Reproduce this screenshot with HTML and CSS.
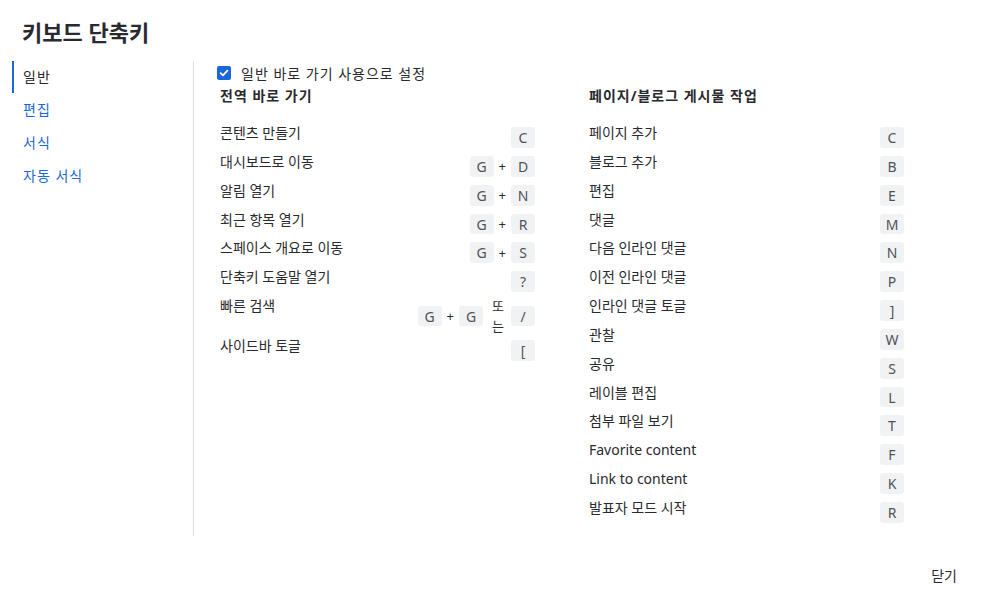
FILE: index.html
```html
<!DOCTYPE html>
<html lang="ko">
<head>
<meta charset="utf-8">
<title>키보드 단축키</title>
<link rel="stylesheet" href="styles.css">
</head>
<body>
<div class="dialog">
  <h1 class="title">키보드 단축키</h1>
  <div class="body">
    <nav class="sidebar">
      <a class="nav-item active">일반</a>
      <a class="nav-item">편집</a>
      <a class="nav-item">서식</a>
      <a class="nav-item">자동 서식</a>
    </nav>
    <main class="content">
      <label class="toggle">
        <span class="checkbox"><svg width="10" height="10" viewBox="0 0 10 10"><path d="M1.6 5.2 L4 7.4 L8.4 2.6" fill="none" stroke="#fff" stroke-width="1.8" stroke-linecap="round" stroke-linejoin="round"/></svg></span>
        <span>일반 바로 가기 사용으로 설정</span>
      </label>
      <div class="columns">
        <section class="col">
          <h2 class="col-head">전역 바로 가기</h2>
          <div class="row"><span class="desc">콘텐츠 만들기</span><span class="keys"><kbd>C</kbd></span></div>
          <div class="row"><span class="desc">대시보드로 이동</span><span class="keys"><kbd>G</kbd><span class="plus">+</span><kbd>D</kbd></span></div>
          <div class="row"><span class="desc">알림 열기</span><span class="keys"><kbd>G</kbd><span class="plus">+</span><kbd>N</kbd></span></div>
          <div class="row"><span class="desc">최근 항목 열기</span><span class="keys"><kbd>G</kbd><span class="plus">+</span><kbd>R</kbd></span></div>
          <div class="row"><span class="desc">스페이스 개요로 이동</span><span class="keys"><kbd>G</kbd><span class="plus">+</span><kbd>S</kbd></span></div>
          <div class="row"><span class="desc">단축키 도움말 열기</span><span class="keys"><kbd>?</kbd></span></div>
          <div class="row"><span class="desc">빠른 검색</span><span class="keys"><kbd>G</kbd><span class="plus">+</span><kbd>G</kbd><span class="or">또<br>는</span><kbd>/</kbd></span></div>
          <div class="row"><span class="desc">사이드바 토글</span><span class="keys"><kbd>[</kbd></span></div>
        </section>
        <section class="col">
          <h2 class="col-head">페이지/블로그 게시물 작업</h2>
          <div class="row"><span class="desc">페이지 추가</span><span class="keys"><kbd>C</kbd></span></div>
          <div class="row"><span class="desc">블로그 추가</span><span class="keys"><kbd>B</kbd></span></div>
          <div class="row"><span class="desc">편집</span><span class="keys"><kbd>E</kbd></span></div>
          <div class="row"><span class="desc">댓글</span><span class="keys"><kbd>M</kbd></span></div>
          <div class="row"><span class="desc">다음 인라인 댓글</span><span class="keys"><kbd>N</kbd></span></div>
          <div class="row"><span class="desc">이전 인라인 댓글</span><span class="keys"><kbd>P</kbd></span></div>
          <div class="row"><span class="desc">인라인 댓글 토글</span><span class="keys"><kbd>]</kbd></span></div>
          <div class="row"><span class="desc">관찰</span><span class="keys"><kbd>W</kbd></span></div>
          <div class="row"><span class="desc">공유</span><span class="keys"><kbd>S</kbd></span></div>
          <div class="row"><span class="desc">레이블 편집</span><span class="keys"><kbd>L</kbd></span></div>
          <div class="row"><span class="desc">첨부 파일 보기</span><span class="keys"><kbd>T</kbd></span></div>
          <div class="row"><span class="desc">Favorite content</span><span class="keys"><kbd>F</kbd></span></div>
          <div class="row"><span class="desc">Link to content</span><span class="keys"><kbd>K</kbd></span></div>
          <div class="row"><span class="desc">발표자 모드 시작</span><span class="keys"><kbd>R</kbd></span></div>
        </section>
      </div>
    </main>
  </div>
  <div class="footer">
    <button class="close">닫기</button>
  </div>
</div>
</body>
</html>
```
FILE: styles.css
```css
* { box-sizing: border-box; }
html, body { margin: 0; padding: 0; background: #fff; }
body {
  font-family: "Noto Sans", "Noto Sans CJK KR", sans-serif;
  font-size: 14px;
  color: #292a2e;
}
.dialog { width: 986px; height: 614px; }
.title {
  margin: 0;
  padding: 20px 22px 0;
  font-size: 22px;
  line-height: 24px;
  font-weight: 700;
  color: #292a2e;
}
.body {
  display: flex;
  margin-top: 17px;
}
.sidebar {
  width: 194px;
  padding-left: 12px;
  border-right: 1px solid #dddee1;
  display: flex;
  flex-direction: column;
}
.nav-item {
  display: block;
  height: 32px;
  line-height: 32px;
  margin-bottom: 1px;
  padding-left: 9px;
  border-left: 2px solid transparent;
  color: #1868db;
  font-size: 14px;
  letter-spacing: 1px;
  cursor: pointer;
}
.nav-item.active {
  color: #292a2e;
  border-left-color: #1868db;
}
.content {
  flex: 1;
  padding: 2px 0 9px 23px;
}
.toggle {
  display: flex;
  align-items: center;
  gap: 10px;
  height: 20px;
  font-size: 14px;
  letter-spacing: 1px;
}
.checkbox {
  width: 14px;
  height: 14px;
  border-radius: 2px;
  background: #1868db;
  display: flex;
  align-items: center;
  justify-content: center;
}
.columns {
  display: grid;
  grid-template-columns: 315px 315px;
  column-gap: 54px;
  margin-left: 3px;
  margin-top: 3px;
}
.col-head {
  margin: 0 0 17px;
  font-size: 14px;
  line-height: 20px;
  font-weight: 700;
  letter-spacing: 1px;
}
.row {
  display: flex;
  justify-content: space-between;
  align-items: flex-start;
}
.desc { line-height: 20px; font-size: 14px; }
.keys {
  display: flex;
  align-items: center;
}
kbd {
  display: inline-block;
  min-width: 24px;
  height: 20.85px;
  line-height: 21px;
  margin: 4px 0;
  padding: 0 5px;
  text-align: center;
  background: #f1f2f4;
  border-radius: 3px;
  font-family: inherit;
  font-size: 14px;
  color: #505258;
}
.plus { margin: 0 5px; font-size: 13px; color: #292a2e; }
.or {
  display: block;
  width: 14px;
  margin: 0 5px 0 9px;
  line-height: 20px;
  font-size: 13px;
}
.footer {
  display: flex;
  justify-content: flex-end;
  margin-top: 23px;
  padding-right: 17px;
}
.close {
  height: 32px;
  padding: 0 12px;
  border: 0;
  background: transparent;
  font-family: inherit;
  font-size: 14px;
  color: #292a2e;
  cursor: pointer;
}
```
